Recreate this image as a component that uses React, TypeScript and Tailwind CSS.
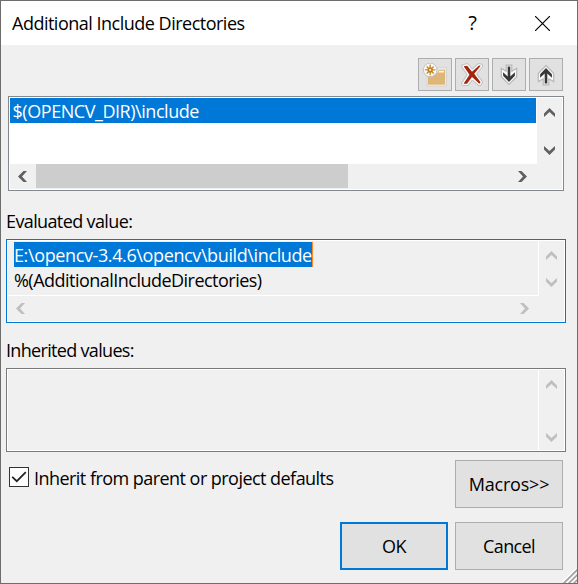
import { clsx } from 'clsx'
import type { ReactNode } from 'react'

type Direction = 'up' | 'down' | 'left' | 'right'

const CHEVRONS: Record<Direction, string> = {
  up: '0,5.5 5.5,0 11,5.5 11,9 5.5,4 0,9',
  down: '0,3.5 5.5,9 11,3.5 11,0 5.5,5 0,0',
  left: '5.5,0 0,5.5 5.5,11 9,11 4,5.5 9,0',
  right: '3.5,0 9,5.5 3.5,11 0,11 5,5.5 0,0',
}

function Chevron({ direction, disabled }: { direction: Direction; disabled?: boolean }) {
  const vertical = direction === 'up' || direction === 'down'
  return (
    <svg
      width={vertical ? 11 : 9}
      height={vertical ? 9 : 11}
      className={clsx('block shrink-0', disabled ? 'fill-[#bfbfbf]' : 'fill-[#606060]')}
    >
      <polygon points={CHEVRONS[direction]} />
    </svg>
  )
}

function ToolButton({ label, children }: { label: string; children: ReactNode }) {
  return (
    <button
      aria-label={label}
      className="flex h-[33px] w-[34px] items-center justify-center border border-[#adadad] bg-[#e1e1e1]"
    >
      <svg width="24" height="24" viewBox="0 0 24 24" className="shrink-0">
        {children}
      </svg>
    </button>
  )
}

const ARROW_DOWN = 'M10.7 3.6h2.6v9.8l4.6-4.2v3.6L12 18.9l-5.9-6.1V9.2l4.6 4.2z'
const ARROW_HALO = 'M9.2 2.2h5.6v6l4.9-2.8v8.3L12 21.5l-7.7-7.8V5.4l4.9 2.8z'

function ArrowIcon({ up }: { up?: boolean }) {
  return (
    <g transform={up ? 'rotate(180 12 12)' : undefined}>
      <path d={ARROW_HALO} fill="#fafafa" stroke="#b8b8b8" strokeWidth="1.2" />
      <path d={ARROW_DOWN} fill="#383838" />
    </g>
  )
}

function NewFolderIcon() {
  return (
    <>
      <path d="M4.2 8.5h9l1.6-3.6h8.6v18H4.2z" fill="#fafafa" stroke="#c6c6c6" strokeWidth="0.7" />
      <path d="M5 10.3h9l1.6-3.8h6.6v15.2H5z" fill="#deb678" />
      <path d="M16.2 7.7h4.8v1.7h-5.5z" fill="#faf4e8" />
      <circle cx="7.2" cy="6.9" r="6.8" fill="#fafafa" stroke="#c0c0c0" strokeWidth="1" />
      <path
        d="M7.2 1.6v10.6M1.9 6.9h10.6M3.7 3.4l7 7M10.7 3.4l-7 7"
        stroke="#c98a32"
        strokeWidth="1.4"
      />
      <circle cx="7.2" cy="6.9" r="2.6" fill="#c27d1a" />
      <circle cx="7.2" cy="6.9" r="1.1" fill="#f8ead0" />
    </>
  )
}

const CROSS = 'M3.6 3.3l3.6-.6 4.8 6 7-6.2 1.7.3-6.5 8 6.4 8.5-1.2 1.4-7.4-6.6-5 6.6H3.5l6-9z'

function DeleteIcon() {
  return (
    <g strokeLinejoin="round">
      <path d={CROSS} fill="#c2c2c2" stroke="#c2c2c2" strokeWidth="4.8" />
      <path d={CROSS} fill="#fafafa" stroke="#fafafa" strokeWidth="2.8" />
      <path d={CROSS} fill="#a1260d" />
    </g>
  )
}

function TitleBar() {
  return (
    <div className="flex h-11 shrink-0 items-center bg-white pl-[11px]">
      <span className="flex-1 pt-px tracking-[-0.5px]">Additional Include Directories</span>
      <span className="mr-[58px] w-[9px] text-center text-[20px] leading-none">?</span>
      <svg width="15" height="15" className="mr-[27px] block stroke-black">
        <path d="M0 0l15 15M15 0L0 15" strokeWidth="1.15" />
      </svg>
    </div>
  )
}

function Toolbar() {
  return (
    <div className="mt-[13px] flex justify-end gap-[3px] pr-[14px]">
      <ToolButton label="New Line">
        <NewFolderIcon />
      </ToolButton>
      <ToolButton label="Delete">
        <DeleteIcon />
      </ToolButton>
      <ToolButton label="Move Down">
        <ArrowIcon />
      </ToolButton>
      <ToolButton label="Move Up">
        <ArrowIcon up />
      </ToolButton>
    </div>
  )
}

function DirectoryList() {
  return (
    <div className="mt-[5px] ml-[7px] h-[95px] w-[556px] border border-[#828790] bg-white p-px">
      <div className="flex h-[66px]">
        <div className="w-[527px] pr-px">
          <div className="h-[25px] bg-[#0078d7] pl-[2.5px] leading-[27px] tracking-[-0.45px] text-white">
            $(OPENCV_DIR)\include
          </div>
        </div>
        <div className="flex flex-1 flex-col items-center justify-between bg-[#f0f0f0] pt-[10px] pb-[9px]">
          <Chevron direction="up" />
          <Chevron direction="down" />
        </div>
      </div>
      <div className="flex h-[25px] items-center bg-[#f0f0f0]">
        <div className="w-[26px] pl-2">
          <Chevron direction="left" />
        </div>
        <div className="h-6 w-[312px] self-start bg-[#cdcdcd]" />
        <div className="ml-[170px]">
          <Chevron direction="right" />
        </div>
      </div>
    </div>
  )
}

function EvaluatedValue() {
  return (
    <div className="ml-[5px] h-[84px] w-[560px] border border-[#0078d7] bg-white p-px">
      <div className="flex h-[54px]">
        <div className="mr-px w-[530px] bg-[#f0f0f0] pt-px pl-[6px]">
          <div className="h-[25px] w-[299px] border-r border-[#ff8728] bg-[#0078d7] leading-[27px] tracking-[-0.38px] whitespace-nowrap text-white">
            E:\opencv-3.4.6\opencv\build\include
          </div>
          <div className="h-[25px] leading-[27px] tracking-[-0.52px]">%(AdditionalIncludeDirectories)</div>
        </div>
        <div className="flex flex-1 flex-col items-center justify-between bg-[#f0f0f0] pt-[10px] pb-2">
          <Chevron direction="up" disabled />
          <Chevron direction="down" disabled />
        </div>
      </div>
      <div className="flex h-[26px]">
        <div className="mt-px flex flex-1 items-center justify-between bg-[#f0f0f0] pr-[10px] pl-2">
          <Chevron direction="left" disabled />
          <Chevron direction="right" disabled />
        </div>
        <div className="w-[25px] bg-[#f0f0f0]" />
      </div>
    </div>
  )
}

function InheritedValues() {
  return (
    <div className="ml-[5px] flex h-[84px] w-[560px] border border-[#7a7a7a] bg-white p-px">
      <div className="mr-px w-[530px] bg-[#f0f0f0]" />
      <div className="flex flex-1 flex-col items-center justify-between bg-[#f0f0f0] pt-[10px] pb-2">
        <Chevron direction="up" disabled />
        <Chevron direction="down" disabled />
      </div>
    </div>
  )
}

function DialogButton({ primary, children }: { primary?: boolean; children: ReactNode }) {
  return (
    <button
      className={clsx(
        'h-12 w-[108px] bg-[#e1e1e1] pt-px',
        primary ? 'border-2 border-[#0078d7]' : 'border border-[#adadad]',
      )}
    >
      {children}
    </button>
  )
}

export default function App() {
  return (
    <div className="relative flex h-[584px] w-[578px] flex-col overflow-hidden border border-[#6d6d6d] bg-[#f0f0f0] font-['Open_Sans','Noto_Sans',sans-serif] text-[18px] text-black">
      <TitleBar />
      <Toolbar />
      <DirectoryList />

      <div className="mt-[18px] ml-[5px] h-[30px] leading-[25px] tracking-[-0.62px]">Evaluated value:</div>
      <EvaluatedValue />

      <div className="mt-[15px] ml-[5px] h-[30px] leading-[25px] tracking-[-0.68px]">Inherited values:</div>
      <InheritedValues />

      <div className="mt-2 flex justify-between pr-[14px] pl-2">
        <label className="mt-[7px] flex h-5 items-center gap-[5px]">
          <span className="flex size-5 items-center justify-center border border-[#333] bg-white">
            <svg width="16" height="12" className="block fill-none stroke-[#222]">
              <path d="M1.2 5.8l4.6 4.4L14.8 1.2" strokeWidth="1.7" />
            </svg>
          </span>
          <span className="pt-[3px] tracking-[-0.54px]">Inherit from parent or project defaults</span>
        </label>
        <DialogButton>
          <span className="tracking-[-0.2px]">Macros&gt;&gt;</span>
        </DialogButton>
      </div>

      <div className="mt-[14px] flex justify-end gap-[7px] pr-[14px]">
        <DialogButton primary>
          <span className="tracking-[-0.5px]">OK</span>
        </DialogButton>
        <DialogButton>
          <span className="tracking-[-0.65px]">Cancel</span>
        </DialogButton>
      </div>

      <svg width="14" height="14" className="absolute right-0 bottom-0">
        <path d="M-1 14L14 -1M4 14L14 4M9 14L14 9" stroke="#fff" strokeWidth="1.4" />
        <path d="M0.5 14.5L14.5 0.5M5.5 14.5L14.5 5.5M10.5 14.5L14.5 10.5" stroke="#a0a0a0" strokeWidth="1.6" />
      </svg>
    </div>
  )
}
